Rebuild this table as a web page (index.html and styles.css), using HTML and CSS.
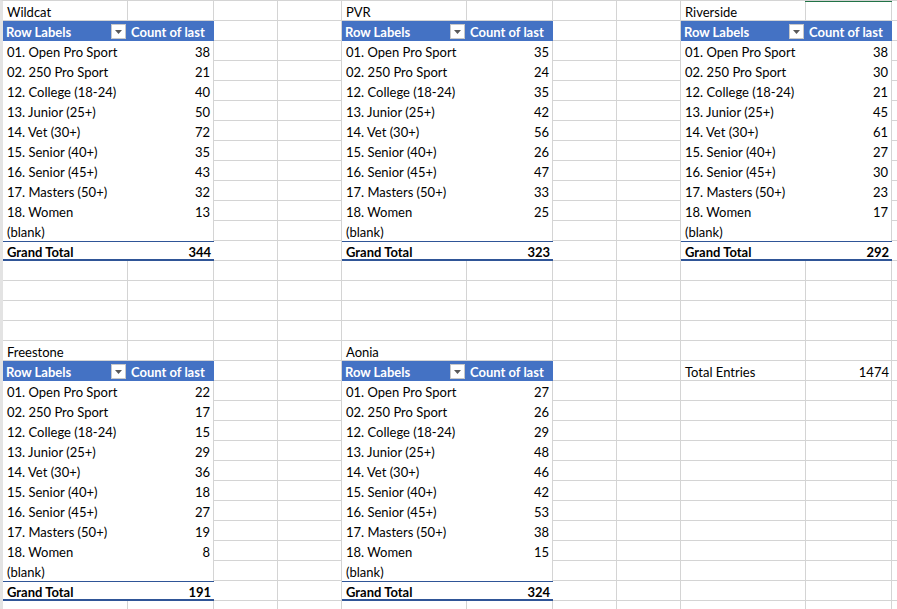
FILE: index.html
```html
<!DOCTYPE html>
<html>
<head>
<meta charset="utf-8">
<link rel="stylesheet" href="styles.css">
</head>
<body>
<div class="sheet">
  <div class="cell title c1 r1">Wildcat</div>
  <div class="pivot c1 r2">
    <div class="hd lbl">Row Labels<svg class="dd" width="15" height="15" viewBox="0 0 15 15"><rect x="0.5" y="0.5" width="14" height="14" fill="#fff" stroke="#c8c8c8"/><polygon points="4,6 11,6 7.5,10" fill="#595959"/></svg></div>
    <div class="hd">Count of last</div>
    <div class="k">01. Open Pro Sport</div><div class="v">38</div>
    <div class="k">02. 250 Pro Sport</div><div class="v">21</div>
    <div class="k">12. College (18-24)</div><div class="v">40</div>
    <div class="k">13. Junior (25+)</div><div class="v">50</div>
    <div class="k">14. Vet (30+)</div><div class="v">72</div>
    <div class="k">15. Senior (40+)</div><div class="v">35</div>
    <div class="k">16. Senior (45+)</div><div class="v">43</div>
    <div class="k">17. Masters (50+)</div><div class="v">32</div>
    <div class="k">18. Women</div><div class="v">13</div>
    <div class="k">(blank)</div><div class="v"></div>
    <div class="k gt">Grand Total</div><div class="v gt">344</div>
  </div>

  <div class="cell title c5 r1">PVR</div>
  <div class="pivot c5 r2">
    <div class="hd lbl">Row Labels<svg class="dd" width="15" height="15" viewBox="0 0 15 15"><rect x="0.5" y="0.5" width="14" height="14" fill="#fff" stroke="#c8c8c8"/><polygon points="4,6 11,6 7.5,10" fill="#595959"/></svg></div>
    <div class="hd">Count of last</div>
    <div class="k">01. Open Pro Sport</div><div class="v">35</div>
    <div class="k">02. 250 Pro Sport</div><div class="v">24</div>
    <div class="k">12. College (18-24)</div><div class="v">35</div>
    <div class="k">13. Junior (25+)</div><div class="v">42</div>
    <div class="k">14. Vet (30+)</div><div class="v">56</div>
    <div class="k">15. Senior (40+)</div><div class="v">26</div>
    <div class="k">16. Senior (45+)</div><div class="v">47</div>
    <div class="k">17. Masters (50+)</div><div class="v">33</div>
    <div class="k">18. Women</div><div class="v">25</div>
    <div class="k">(blank)</div><div class="v"></div>
    <div class="k gt">Grand Total</div><div class="v gt">323</div>
  </div>

  <div class="cell title c9 r1">Riverside</div>
  <div class="cell sel c10 r1"></div>
  <div class="pivot c9 r2">
    <div class="hd lbl">Row Labels<svg class="dd" width="15" height="15" viewBox="0 0 15 15"><rect x="0.5" y="0.5" width="14" height="14" fill="#fff" stroke="#c8c8c8"/><polygon points="4,6 11,6 7.5,10" fill="#595959"/></svg></div>
    <div class="hd">Count of last</div>
    <div class="k">01. Open Pro Sport</div><div class="v">38</div>
    <div class="k">02. 250 Pro Sport</div><div class="v">30</div>
    <div class="k">12. College (18-24)</div><div class="v">21</div>
    <div class="k">13. Junior (25+)</div><div class="v">45</div>
    <div class="k">14. Vet (30+)</div><div class="v">61</div>
    <div class="k">15. Senior (40+)</div><div class="v">27</div>
    <div class="k">16. Senior (45+)</div><div class="v">30</div>
    <div class="k">17. Masters (50+)</div><div class="v">23</div>
    <div class="k">18. Women</div><div class="v">17</div>
    <div class="k">(blank)</div><div class="v"></div>
    <div class="k gt">Grand Total</div><div class="v gt">292</div>
  </div>

  <div class="cell title c1 r18">Freestone</div>
  <div class="pivot c1 r19">
    <div class="hd lbl">Row Labels<svg class="dd" width="15" height="15" viewBox="0 0 15 15"><rect x="0.5" y="0.5" width="14" height="14" fill="#fff" stroke="#c8c8c8"/><polygon points="4,6 11,6 7.5,10" fill="#595959"/></svg></div>
    <div class="hd">Count of last</div>
    <div class="k">01. Open Pro Sport</div><div class="v">22</div>
    <div class="k">02. 250 Pro Sport</div><div class="v">17</div>
    <div class="k">12. College (18-24)</div><div class="v">15</div>
    <div class="k">13. Junior (25+)</div><div class="v">29</div>
    <div class="k">14. Vet (30+)</div><div class="v">36</div>
    <div class="k">15. Senior (40+)</div><div class="v">18</div>
    <div class="k">16. Senior (45+)</div><div class="v">27</div>
    <div class="k">17. Masters (50+)</div><div class="v">19</div>
    <div class="k">18. Women</div><div class="v">8</div>
    <div class="k">(blank)</div><div class="v"></div>
    <div class="k gt">Grand Total</div><div class="v gt">191</div>
  </div>

  <div class="cell title c5 r18">Aonia</div>
  <div class="pivot c5 r19">
    <div class="hd lbl">Row Labels<svg class="dd" width="15" height="15" viewBox="0 0 15 15"><rect x="0.5" y="0.5" width="14" height="14" fill="#fff" stroke="#c8c8c8"/><polygon points="4,6 11,6 7.5,10" fill="#595959"/></svg></div>
    <div class="hd">Count of last</div>
    <div class="k">01. Open Pro Sport</div><div class="v">27</div>
    <div class="k">02. 250 Pro Sport</div><div class="v">26</div>
    <div class="k">12. College (18-24)</div><div class="v">29</div>
    <div class="k">13. Junior (25+)</div><div class="v">48</div>
    <div class="k">14. Vet (30+)</div><div class="v">46</div>
    <div class="k">15. Senior (40+)</div><div class="v">42</div>
    <div class="k">16. Senior (45+)</div><div class="v">53</div>
    <div class="k">17. Masters (50+)</div><div class="v">38</div>
    <div class="k">18. Women</div><div class="v">15</div>
    <div class="k">(blank)</div><div class="v"></div>
    <div class="k gt">Grand Total</div><div class="v gt">324</div>
  </div>

  <div class="cell title c9 r19">Total Entries</div>
  <div class="cell num c10 r19">1474</div>
</div>
</body>
</html>
```

FILE: styles.css
```css
html, body {
  margin: 0;
  padding: 0;
  background: #fff;
  overflow: hidden;
}
.sheet {
  width: 894px;
  height: 608px;
  overflow: hidden;
  border-top: 1px solid #d4d4d4;
  border-left: 3px solid #e3e3e3;
  display: grid;
  grid-template-columns: 125px 86px 64px 64px 125px 86px 64px 64px 125px 86px 64px;
  grid-template-rows: repeat(31, 20px);
  font-family: Lato, "Liberation Sans", sans-serif;
  font-size: 13px;
  color: #000;
  background-color: #fff;
  background-image:
    repeating-linear-gradient(to bottom, transparent 0 19px, #d4d4d4 19px 20px),
    repeating-linear-gradient(to right,
      transparent 0 124px, #d4d4d4 124px 125px,
      transparent 125px 210px, #d4d4d4 210px 211px,
      transparent 211px 274px, #d4d4d4 274px 275px,
      transparent 275px 338px, #d4d4d4 338px 339px);
}
.cell {
  line-height: 22px;
  height: 20px;
  padding: 0 4px;
  white-space: nowrap;
  position: relative;
}
.num { text-align: right; padding-right: 3px; }
.c1 { grid-column: 1; }
.c5 { grid-column: 5; }
.c9 { grid-column: 9; }
.c10 { grid-column: 10; }
.r1 { grid-row: 1; }
.r18 { grid-row: 18; }
.r19 { grid-row: 19; }
.pivot.c1 { grid-column: 1 / 3; }
.pivot.c5 { grid-column: 5 / 7; }
.pivot.c9 { grid-column: 9 / 11; }
.pivot.r2 { grid-row: 2 / 14; }
.pivot.r19 { grid-row: 19 / 31; }
.sel::before {
  content: "";
  position: absolute;
  left: -1px;
  right: 0;
  top: -1px;
  height: 2px;
  background: #217346;
}
.pivot {
  background: #fff;
  display: grid;
  grid-template-columns: 125px 86px;
  grid-auto-rows: 20px;
}
.pivot > div {
  box-sizing: border-box;
  line-height: 22px;
  white-space: nowrap;
  overflow: hidden;
}
.hd {
  background: #4472c4;
  color: #fff;
  font-weight: bold;
  padding-left: 3px;
}
.hd.lbl {
  display: flex;
  align-items: flex-start;
  justify-content: space-between;
  padding-right: 2px;
}
.dd { display: block; margin-top: 3px; }
.k { padding-left: 4px; }
.v {
  text-align: right;
  padding-right: 3px;
  border-right: 1px solid #d4d4d4;
}
.pivot > .gt {
  font-weight: bold;
  border-top: 1px solid #2f5597;
  border-bottom: 2px solid #2f5597;
  line-height: 20px;
}
.v.gt { border-right: none; }
```
